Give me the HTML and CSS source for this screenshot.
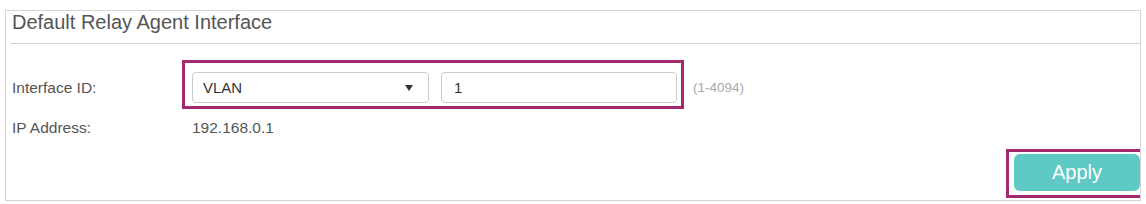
FILE: index.html
```html
<!DOCTYPE html>
<html lang="en">
<head>
    <meta charset="UTF-8">
    <title>Default Relay Agent Interface</title>
    <link rel="stylesheet" href="styles.css">
</head>
<body>
    <div class="panel">
        <div class="panel-title">Default Relay Agent Interface</div>

        <div class="form-row field-row">
            <label class="form-label">Interface ID:</label>
            <div class="mark mark-fields">
                <div class="select">
                    <span>VLAN</span>
                    <span class="caret"></span>
                </div>
                <input class="text-input" type="text" value="1">
            </div>
            <span class="hint">(1-4094)</span>
        </div>

        <div class="form-row info-row">
            <label class="form-label">IP Address:</label>
            <span class="value">192.168.0.1</span>
        </div>

        <div class="actions">
            <div class="mark mark-apply">
                <button class="btn-apply">Apply</button>
            </div>
        </div>
    </div>
</body>
</html>
```

FILE: styles.css
```css
* {
    margin: 0;
    padding: 0;
    box-sizing: border-box;
}

body {
    font-family: 'Liberation Sans', Arial, sans-serif;
    background: #fff;
    width: 1146px;
    height: 204px;
    overflow: hidden;
}

.panel {
    margin: 10px 5px 0 5px;
    border: 1px solid #d4d4d4;
    padding: 0 0 2px 0;
}

.panel-title {
    margin-left: 5px;
    height: 33px;
    padding: 0 0 0 1px;
    border-bottom: 1px solid #d0d0d0;
    font-size: 20px;
    line-height: 22px;
    color: #555;
}

.form-row {
    display: flex;
    align-items: center;
    padding-left: 6px;
}

.form-label {
    width: 170px;
    font-size: 15.5px;
    color: #555;
}

.field-row {
    margin-top: 16px;
}

/* magenta annotation boxes */
.mark {
    border: 3px solid #a32a6f;
}

.mark-fields {
    display: flex;
    height: 49px;
    padding: 9px 4px 2px 7px;
    gap: 12px;
}

.select {
    width: 237px;
    height: 31px;
    border: 1px solid #ccc;
    border-radius: 4px;
    display: flex;
    align-items: center;
    justify-content: space-between;
    padding: 0 15px 0 10px;
    font-size: 15px;
    color: #333;
}

.caret {
    width: 0;
    height: 0;
    border-left: 4px solid transparent;
    border-right: 4px solid transparent;
    border-top: 6px solid #333;
}

.text-input {
    width: 236px;
    height: 31px;
    border: 1px solid #ccc;
    border-radius: 4px;
    padding: 0 12px;
    font-family: inherit;
    font-size: 15px;
    color: #333;
    outline: none;
}

.hint {
    margin-left: 9px;
    margin-top: 6px;
    font-size: 13.5px;
    color: #aaa;
}

.field-row .form-label {
    margin-top: 6px;
}

.info-row {
    margin-top: 9px;
    height: 20px;
}

.form-label + .value {
    margin-left: 10px;
}

.value {
    font-size: 15.5px;
    color: #555;
}

.actions {
    display: flex;
    justify-content: flex-end;
    margin-top: 11px;
}

.mark-apply {
    border-right: none;
    width: 134px;
    height: 49px;
    padding: 2px 0 0 5px;
}

.btn-apply {
    width: 126px;
    height: 37px;
    background: #5ec9c5;
    border: none;
    border-radius: 6px;
    color: #fff;
    font-family: inherit;
    font-size: 20px;
    cursor: pointer;
}
```
